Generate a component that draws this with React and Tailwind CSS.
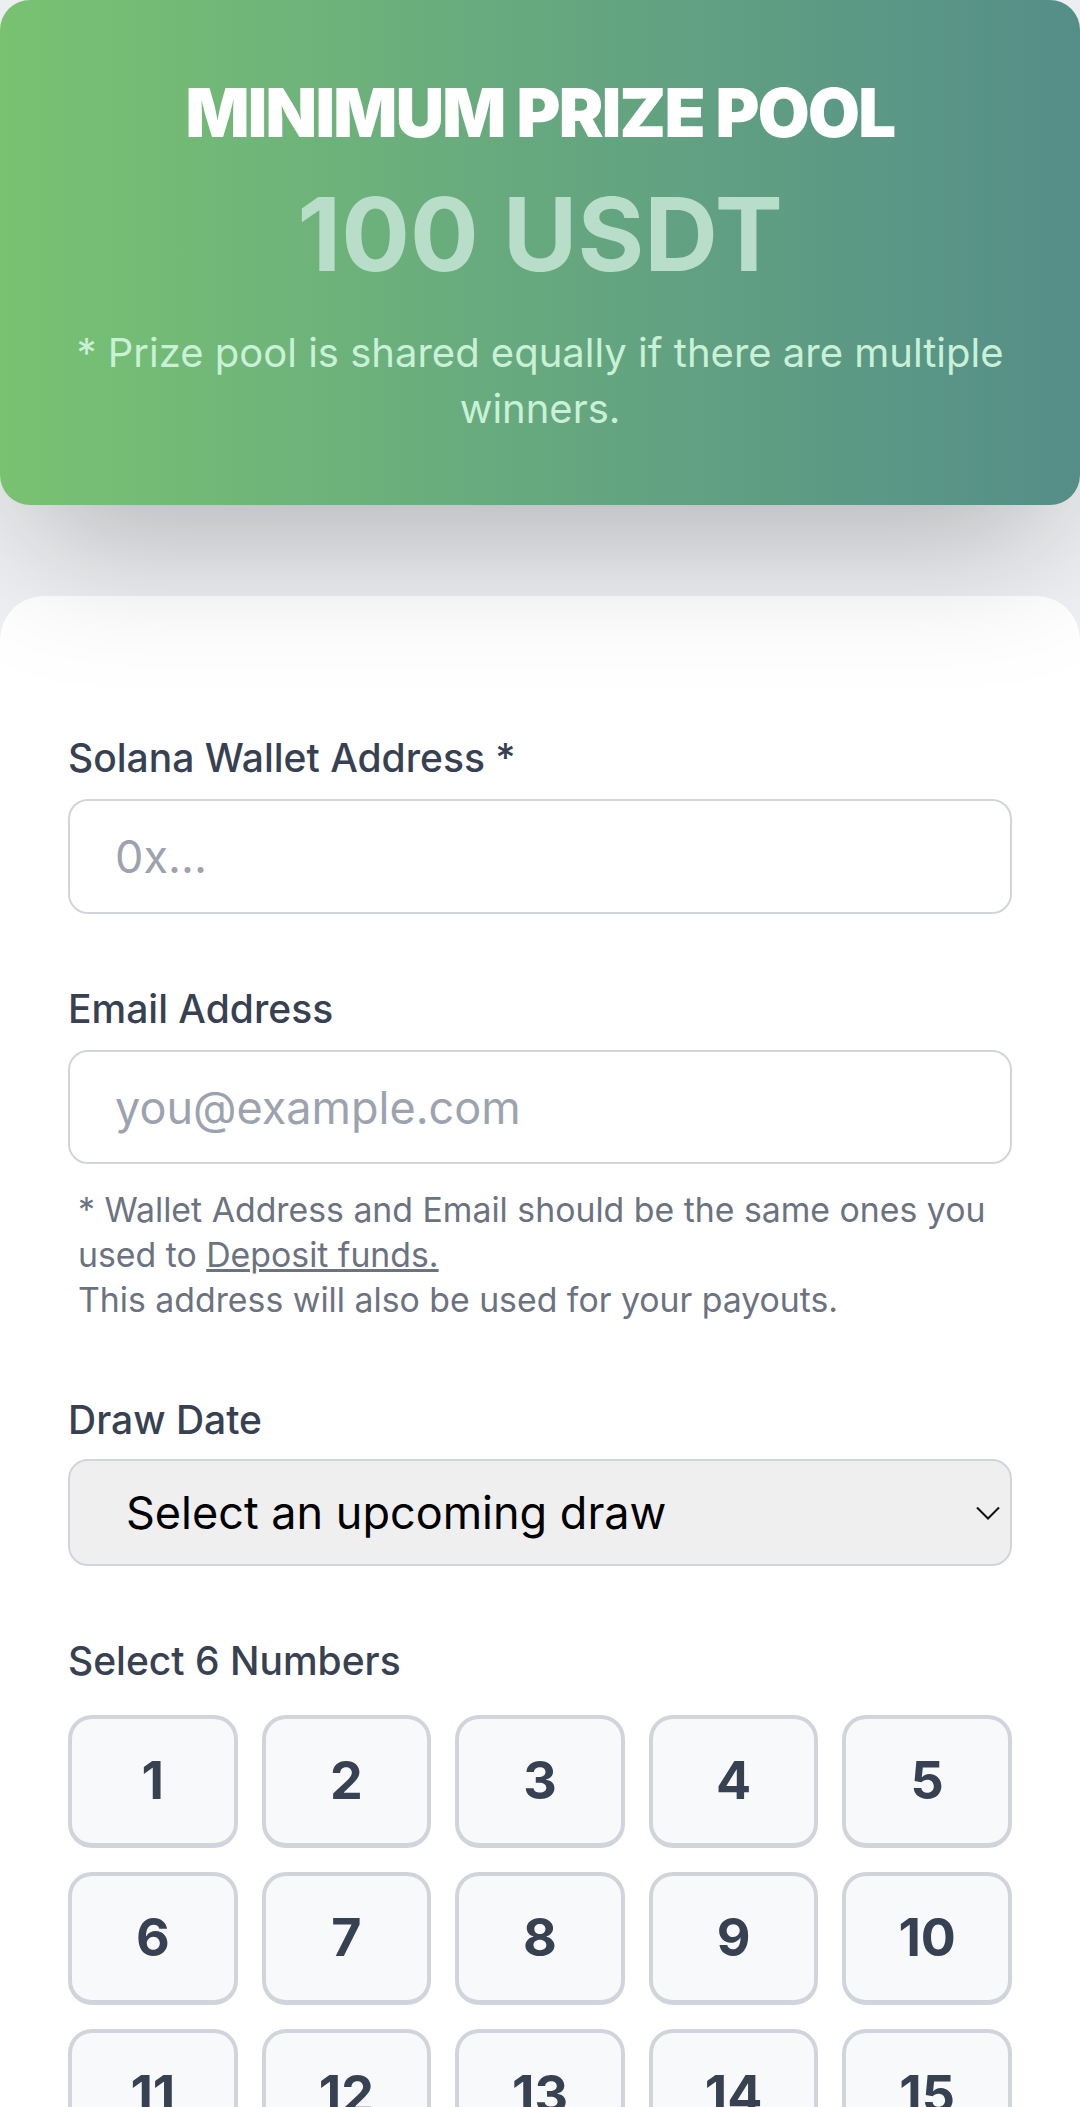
import React, { useState } from 'react';

// ticket form: prize banner + entry fields + number picker

const NUMBERS = Array.from({ length: 40 }, (_, i) => i + 1);

const Label = ({ children, className = '' }) => (
    <label className={`block text-[39px] leading-[40px] font-medium text-[#374151] ${className}`}>
        {children}
    </label>
);

export default function App() {
    const [picked, setPicked] = useState([]);

    // toggle a number, max 6
    const toggle = (n) => {
        setPicked((p) => (p.includes(n) ? p.filter((x) => x !== n) : p.length < 6 ? [...p, n] : p));
    };

    return (
        <div className="min-h-screen bg-[#eef0f3] font-['Inter',sans-serif]">
            {/* prize banner */}
            <div className="relative z-10 rounded-[30px] bg-linear-to-r from-[#79c271] to-[#558e88] px-[68px] pt-[79px] pb-[68px] text-center shadow-[0_66px_131px_-31px_rgba(0,0,0,0.25)]">
                <h1 className="text-[67px] leading-none font-black tracking-tight text-white">
                    MINIMUM PRIZE POOL
                </h1>
                <div className="mt-[37px] text-[102px] leading-none font-bold text-[#b8ddc8]">100 USDT</div>
                <p className="mt-[40px] text-[40px] leading-[56px] text-[#c9f1d7]">
                    * Prize pool is shared equally if there are multiple winners.
                </p>
            </div>

            {/* form */}
            <div className="mt-[91px] rounded-t-[44px] bg-white px-[68px] pt-[142px] pb-[120px]">
                <Label>Solana Wallet Address *</Label>
                <input
                    type="text"
                    placeholder="0x..."
                    className="mt-[21px] block h-[115px] w-full rounded-[20px] border-[2.6px] border-[#d1d5db] bg-white pl-[45px] text-[45px] text-[#111827] outline-none placeholder:text-[#9ca3af]"
                />

                <Label className="mt-[75px]">Email Address</Label>
                <input
                    type="email"
                    placeholder="you@example.com"
                    className="mt-[21px] block h-[114px] w-full rounded-[20px] border-[2.6px] border-[#d1d5db] bg-white pl-[45px] text-[45px] text-[#111827] outline-none placeholder:text-[#9ca3af]"
                />
                <p className="mt-[23px] px-[10px] text-[33.8px] leading-[45px] text-[#6b7280]">
                    * Wallet Address and Email should be the same ones you used to{' '}
                    <a href="#" className="underline">Deposit funds.</a>
                    <br />
                    This address will also be used for your payouts.
                </p>

                <Label className="mt-[78px]">Draw Date</Label>
                <div className="relative mt-[19px]">
                    <select className="block h-[107px] w-full appearance-none rounded-[20px] border-[2.6px] border-[#d1d5db] bg-[#efefef] pl-[56px] text-[45px] text-black outline-none">
                        <option>Select an upcoming draw</option>
                    </select>
                    <svg
                        className="pointer-events-none absolute right-[12px] top-1/2 h-[14px] w-[24px] -translate-y-1/2"
                        viewBox="0 0 24 14"
                        fill="none"
                        stroke="#111"
                        strokeWidth="2"
                    >
                        <path d="M1 1.5l11 11 11-11" />
                    </svg>
                </div>

                <Label className="mt-[75px]">Select 6 Numbers</Label>
                <div className="mt-[34px] grid grid-cols-5 gap-[24px]">
                    {NUMBERS.map((n) => (
                        <button
                            key={n}
                            onClick={() => toggle(n)}
                            className={`flex h-[133px] items-center justify-center rounded-[24px] border-[4px] border-b-[5px] text-[52px] font-bold ${
                                picked.includes(n)
                                    ? 'border-[#4f9a6f] bg-[#6fb574] text-white'
                                    : 'border-[#d1d5db] bg-[#f8f9fa] text-[#374151]'
                            }`}
                        >
                            {n}
                        </button>
                    ))}
                </div>
            </div>
        </div>
    );
}
